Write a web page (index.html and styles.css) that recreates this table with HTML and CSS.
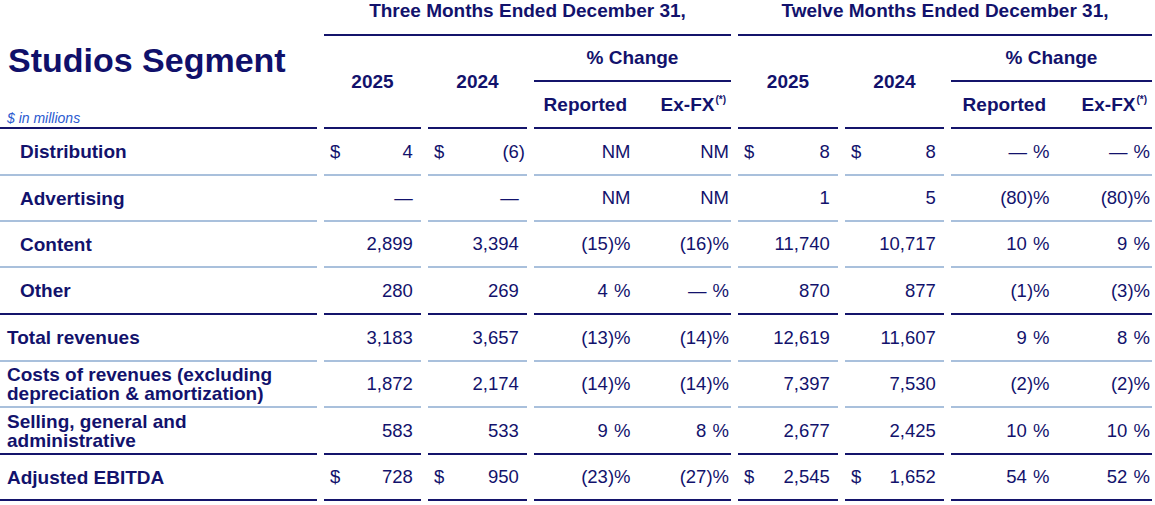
FILE: index.html
```html
<!DOCTYPE html>
<html lang="en">
<head>
<meta charset="utf-8">
<title>Studios Segment</title>
<link rel="stylesheet" href="styles.css">
</head>
<body>
<div class="sheet">
  <div class="hd-label">
    <div class="seg-title">Studios Segment</div>
    <div class="units">$ in millions</div>
  </div>
  <div class="hd-period p1">Three Months Ended December 31,</div>
  <div class="hd-period p2">Twelve Months Ended December 31,</div>

  <div class="hd-year c2">2025</div>
  <div class="hd-year c3">2024</div>
  <div class="hd-chg c4">% Change</div>
  <div class="hd-sub c4"><span>Reported</span><span>Ex-FX<sup>(*)</sup></span></div>
  <div class="hd-year c5">2025</div>
  <div class="hd-year c6">2024</div>
  <div class="hd-chg c7">% Change</div>
  <div class="hd-sub c7"><span>Reported</span><span>Ex-FX<sup>(*)</sup></span></div>

  <!-- Distribution -->
  <div class="lbl ind">Distribution</div>
  <div class="val"><span>$</span><span>4<i>)</i></span></div>
  <div class="val"><span>$</span><span>(6)</span></div>
  <div class="pct"><span>NM</span><span>NM</span></div>
  <div class="val"><span>$</span><span>8<i>)</i></span></div>
  <div class="val"><span>$</span><span>8<i>)</i></span></div>
  <div class="pct"><span>—<i>)</i>%</span><span>—<i>)</i>%</span></div>

  <!-- Advertising -->
  <div class="lbl ind">Advertising</div>
  <div class="val"><span></span><span>—<i>)</i></span></div>
  <div class="val"><span></span><span>—<i>)</i></span></div>
  <div class="pct"><span>NM</span><span>NM</span></div>
  <div class="val"><span></span><span>1<i>)</i></span></div>
  <div class="val"><span></span><span>5<i>)</i></span></div>
  <div class="pct"><span>(80)%</span><span>(80)%</span></div>

  <!-- Content -->
  <div class="lbl ind">Content</div>
  <div class="val"><span></span><span>2,899<i>)</i></span></div>
  <div class="val"><span></span><span>3,394<i>)</i></span></div>
  <div class="pct"><span>(15)%</span><span>(16)%</span></div>
  <div class="val"><span></span><span>11,740<i>)</i></span></div>
  <div class="val"><span></span><span>10,717<i>)</i></span></div>
  <div class="pct"><span>10<i>)</i>%</span><span>9<i>)</i>%</span></div>

  <!-- Other -->
  <div class="lbl ind dk">Other</div>
  <div class="val dk"><span></span><span>280<i>)</i></span></div>
  <div class="val dk"><span></span><span>269<i>)</i></span></div>
  <div class="pct dk"><span>4<i>)</i>%</span><span>—<i>)</i>%</span></div>
  <div class="val dk"><span></span><span>870<i>)</i></span></div>
  <div class="val dk"><span></span><span>877<i>)</i></span></div>
  <div class="pct dk"><span>(1)%</span><span>(3)%</span></div>

  <!-- Total revenues -->
  <div class="lbl">Total revenues</div>
  <div class="val"><span></span><span>3,183<i>)</i></span></div>
  <div class="val"><span></span><span>3,657<i>)</i></span></div>
  <div class="pct"><span>(13)%</span><span>(14)%</span></div>
  <div class="val"><span></span><span>12,619<i>)</i></span></div>
  <div class="val"><span></span><span>11,607<i>)</i></span></div>
  <div class="pct"><span>9<i>)</i>%</span><span>8<i>)</i>%</span></div>

  <!-- Costs of revenues -->
  <div class="lbl two">Costs of revenues (excluding<br>depreciation &amp; amortization)</div>
  <div class="val"><span></span><span>1,872<i>)</i></span></div>
  <div class="val"><span></span><span>2,174<i>)</i></span></div>
  <div class="pct"><span>(14)%</span><span>(14)%</span></div>
  <div class="val"><span></span><span>7,397<i>)</i></span></div>
  <div class="val"><span></span><span>7,530<i>)</i></span></div>
  <div class="pct"><span>(2)%</span><span>(2)%</span></div>

  <!-- SG&A -->
  <div class="lbl two dk">Selling, general and<br>administrative</div>
  <div class="val dk"><span></span><span>583<i>)</i></span></div>
  <div class="val dk"><span></span><span>533<i>)</i></span></div>
  <div class="pct dk"><span>9<i>)</i>%</span><span>8<i>)</i>%</span></div>
  <div class="val dk"><span></span><span>2,677<i>)</i></span></div>
  <div class="val dk"><span></span><span>2,425<i>)</i></span></div>
  <div class="pct dk"><span>10<i>)</i>%</span><span>10<i>)</i>%</span></div>

  <!-- Adjusted EBITDA -->
  <div class="lbl dk">Adjusted EBITDA</div>
  <div class="val dk"><span>$</span><span>728<i>)</i></span></div>
  <div class="val dk"><span>$</span><span>950<i>)</i></span></div>
  <div class="pct dk"><span>(23)%</span><span>(27)%</span></div>
  <div class="val dk"><span>$</span><span>2,545<i>)</i></span></div>
  <div class="val dk"><span>$</span><span>1,652<i>)</i></span></div>
  <div class="pct dk"><span>54<i>)</i>%</span><span>52<i>)</i>%</span></div>
</div>
</body>
</html>
```

FILE: styles.css
```css
html, body {
  margin: 0;
  padding: 0;
  background: #ffffff;
}

body {
  font-family: "Liberation Sans", Arial, sans-serif;
  color: #12126c;
}

.sheet {
  display: grid;
  width: 1152px;
  grid-template-columns: 317px 97px 99px 197px 100px 99px 201px;
  grid-template-rows: 36px 46px 47px 47px 46px 46px 47px 47px 46px 47px 46px;
  column-gap: 7px;
}

.sheet > div {
  box-sizing: border-box;
  border-bottom: 2px solid #a9c0dc;
}

.sheet > .dk {
  border-bottom-color: #14146b;
}

/* header */
.hd-label {
  grid-column: 1;
  grid-row: 1 / 4;
  display: flex;
  flex-direction: column;
  justify-content: space-between;
  padding: 40px 0 1px 0;
  border-bottom-color: #14146b !important;
}

.seg-title {
  font-size: 34px;
  font-weight: bold;
  line-height: 40px;
  padding-left: 8px;
  color: #10106a;
}

.units {
  font-size: 14px;
  font-style: italic;
  line-height: 16px;
  padding-left: 7px;
  color: #2a5ad0;
}

.hd-period {
  grid-row: 1;
  font-size: 19px;
  font-weight: bold;
  line-height: 22px;
  text-align: center;
  border-bottom-color: #14146b !important;
}

.p1 { grid-column: 2 / 5; }
.p2 { grid-column: 5 / 8; }

.hd-year {
  grid-row: 2 / 4;
  display: flex;
  align-items: center;
  justify-content: center;
  font-size: 19px;
  font-weight: bold;
  border-bottom-color: #14146b !important;
}

.c2 { grid-column: 2; }
.c3 { grid-column: 3; }
.c4 { grid-column: 4; }
.c5 { grid-column: 5; }
.c6 { grid-column: 6; }
.c7 { grid-column: 7; }

.hd-chg {
  grid-row: 2;
  display: flex;
  align-items: center;
  justify-content: center;
  font-size: 19px;
  font-weight: bold;
  border-bottom-color: #14146b !important;
}

.hd-sub {
  grid-row: 3;
  display: flex;
  align-items: center;
  font-size: 19px;
  font-weight: bold;
  border-bottom-color: #14146b !important;
}

.hd-sub span {
  flex: 1 1 0;
  text-align: right;
  padding-right: 5px;
}

.hd-sub span:first-child {
  padding-right: 6px;
}

.hd-sub sup {
  font-size: 10px;
  vertical-align: 8px;
  line-height: 0;
  margin-left: 1px;
}

/* body rows */
.lbl {
  grid-column: 1;
  display: flex;
  align-items: center;
  font-size: 19px;
  font-weight: bold;
  padding-left: 7px;
  line-height: 19px;
}

.lbl.ind {
  padding-left: 20px;
}

.val {
  display: flex;
  align-items: center;
  justify-content: space-between;
  font-size: 18.5px;
  padding: 0 2px 0 6px;
}

.pct {
  display: flex;
  align-items: center;
  font-size: 18.5px;
}

.pct span {
  flex: 1 1 0;
  text-align: right;
  padding-right: 2px;
}

.val i,
.pct i {
  font-style: normal;
  visibility: hidden;
}
```
